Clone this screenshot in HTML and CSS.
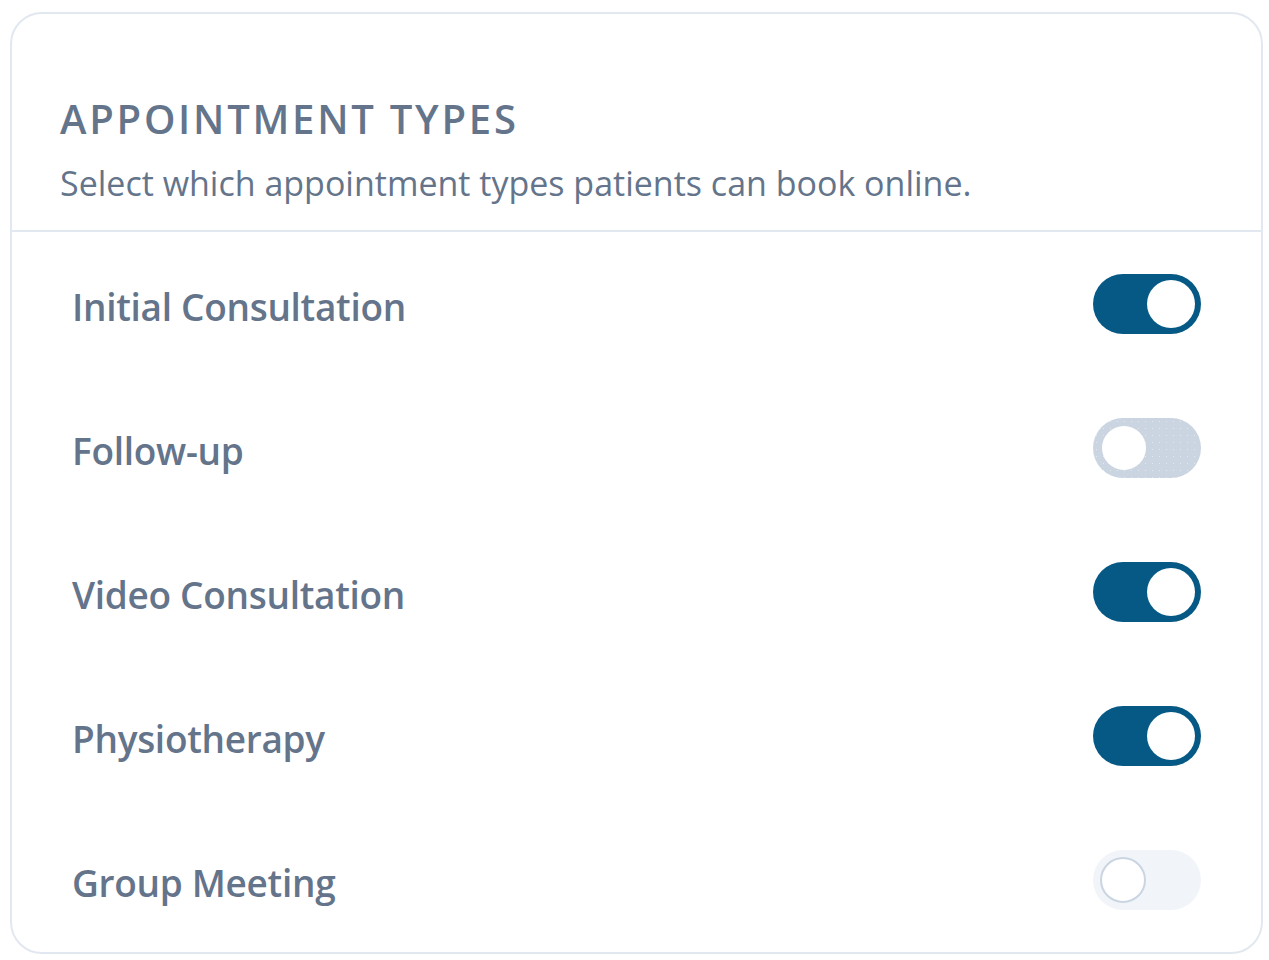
FILE: index.html
```html
<!DOCTYPE HTML>
<html lang="en">
<head>
<meta charset="UTF-8">
<title>Appointment Types</title>
<link rel="stylesheet" href="styles.css">
</head>
<body>
<div class="card">
    <div class="card-head">
        <h2 class="card-title">Appointment Types</h2>
        <p class="card-sub">Select which appointment types patients can book online.</p>
    </div>
    <div class="type-row">
        <span class="type-name">Initial Consultation</span>
        <span class="switch on" role="switch" aria-checked="true"><span class="knob"></span></span>
    </div>
    <div class="type-row">
        <span class="type-name">Follow-up</span>
        <span class="switch off" role="switch" aria-checked="false"><span class="knob"></span></span>
    </div>
    <div class="type-row">
        <span class="type-name">Video Consultation</span>
        <span class="switch on" role="switch" aria-checked="true"><span class="knob"></span></span>
    </div>
    <div class="type-row">
        <span class="type-name">Physiotherapy</span>
        <span class="switch on" role="switch" aria-checked="true"><span class="knob"></span></span>
    </div>
    <div class="type-row">
        <span class="type-name">Group Meeting</span>
        <span class="switch disabled" role="switch" aria-checked="false" aria-disabled="true"><span class="knob"></span></span>
    </div>
</div>
</body>
</html>
```

FILE: styles.css
```css
body {
    margin: 0;
    background: #ffffff;
    font-family: "Open Sans", "Noto Sans", sans-serif;
    color: #64748b;
}

.card {
    box-sizing: border-box;
    width: 1253px;
    margin: 12px 0 0 10px;
    border: 2px solid #e2e8f0;
    border-radius: 32px;
    background: #ffffff;
}

.card-head {
    height: 218px;
    box-sizing: border-box;
    padding: 81px 48px 0 48px;
    border-bottom: 2px solid #e2e8f0;
}

.card-title {
    margin: 0;
    font-size: 40px;
    line-height: 48px;
    font-weight: 600;
    letter-spacing: 2.75px;
    text-transform: uppercase;
}

.card-sub {
    margin: 18px 0 0 0;
    font-size: 34px;
    line-height: 44px;
}

/* one line per appointment type */
.type-row {
    display: flex;
    align-items: center;
    justify-content: space-between;
    height: 144px;
    padding: 0 60px;
}

.type-name {
    padding-top: 4px;
    font-size: 37px;
    font-weight: 600;
    letter-spacing: -0.3px;
}

/* toggle switch */
.switch {
    position: relative;
    width: 108px;
    height: 60px;
    border-radius: 30px;
    flex-shrink: 0;
}

.switch .knob {
    position: absolute;
    top: 50%;
    border-radius: 50%;
    background: #ffffff;
    transform: translateY(-50%);
}

.switch.on {
    background: #075985;
}

.switch.on .knob {
    right: 6px;
    width: 48px;
    height: 48px;
}

.switch.off {
    background-color: #cbd5e1;
    background-image: radial-gradient(rgba(255, 255, 255, 0.45) 0.8px, transparent 1px);
    background-size: 7px 7px;
}

.switch.off .knob {
    left: 9px;
    width: 44px;
    height: 44px;
}

.switch.disabled {
    background: #f1f5f9;
}

.switch.disabled .knob {
    left: 7px;
    width: 46px;
    height: 46px;
    box-sizing: border-box;
    border: 2px solid #cbd5e1;
}
```
